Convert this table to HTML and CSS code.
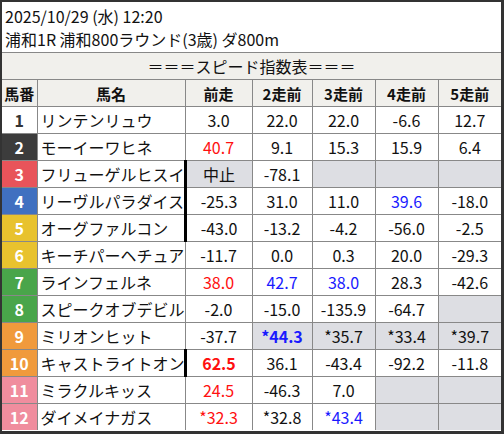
FILE: index.html
```html
<!DOCTYPE html>
<html lang="ja">
<head>
<meta charset="utf-8">
<link rel="stylesheet" href="styles.css">
</head>
<body>
<div class="frame">
  <div class="info">
    <div class="line">2025/10/29 (水) 12:20</div>
    <div class="line">浦和1R 浦和800ラウンド(3歳) ダ800m</div>
  </div>
  <div class="title">＝＝＝スピード指数表＝＝＝</div>
  <table class="speed">
    <colgroup>
      <col class="c-no"><col class="c-name"><col class="c-v1"><col class="c-v2"><col class="c-v3"><col class="c-v4"><col class="c-v5">
    </colgroup>
    <thead>
      <tr><th>馬番</th><th>馬名</th><th>前走</th><th>2走前</th><th>3走前</th><th>4走前</th><th>5走前</th></tr>
    </thead>
    <tbody>
      <tr><td class="no w1">1</td><td class="name">リンテンリュウ</td><td>3.0</td><td>22.0</td><td>22.0</td><td>-6.6</td><td>12.7</td></tr>
      <tr><td class="no w2">2</td><td class="name">モーイーワヒネ</td><td class="red">40.7</td><td>9.1</td><td>15.3</td><td>15.9</td><td>6.4</td></tr>
      <tr><td class="no w3">3</td><td class="name">フリューゲルヒスイ</td><td class="mark gray">中止</td><td>-78.1</td><td class="gray"></td><td class="gray"></td><td class="gray"></td></tr>
      <tr><td class="no w4">4</td><td class="name">リーヴルパラダイス</td><td class="mark">-25.3</td><td>31.0</td><td>11.0</td><td class="blue">39.6</td><td>-18.0</td></tr>
      <tr><td class="no w5">5</td><td class="name">オーグファルコン</td><td class="mark">-43.0</td><td>-13.2</td><td>-4.2</td><td>-56.0</td><td>-2.5</td></tr>
      <tr><td class="no w5">6</td><td class="name">キーチパーヘチュア</td><td>-11.7</td><td>0.0</td><td>0.3</td><td>20.0</td><td>-29.3</td></tr>
      <tr><td class="no w7">7</td><td class="name">ラインフェルネ</td><td class="red">38.0</td><td class="blue">42.7</td><td class="blue">38.0</td><td>28.3</td><td>-42.6</td></tr>
      <tr><td class="no w7">8</td><td class="name">スピークオブデビル</td><td>-2.0</td><td>-15.0</td><td>-135.9</td><td>-64.7</td><td class="gray"></td></tr>
      <tr><td class="no w9">9</td><td class="name">ミリオンヒット</td><td>-37.7</td><td class="gray blue bold">*44.3</td><td class="gray">*35.7</td><td class="gray">*33.4</td><td class="gray">*39.7</td></tr>
      <tr><td class="no w9">10</td><td class="name">キャストライトオン</td><td class="mark red bold">62.5</td><td>36.1</td><td>-43.4</td><td>-92.2</td><td>-11.8</td></tr>
      <tr><td class="no w11">11</td><td class="name">ミラクルキッス</td><td class="red">24.5</td><td>-46.3</td><td>7.0</td><td class="gray"></td><td class="gray"></td></tr>
      <tr><td class="no w11">12</td><td class="name">ダイメイナガス</td><td class="red">*32.3</td><td>*32.8</td><td class="blue">*43.4</td><td class="gray"></td><td class="gray"></td></tr>
    </tbody>
  </table>
</div>
</body>
</html>
```
FILE: styles.css
```css
html, body {
  margin: 0;
  padding: 0;
  background: #ffffff;
}
body {
  font-family: "Noto Sans CJK JP", "Noto Sans", sans-serif;
  color: #111;
}
.frame {
  width: 504px;
  height: 434px;
  box-sizing: border-box;
  border-style: solid;
  border-color: #333;
  border-width: 2px 3px 3px 2px;
  overflow: hidden;
  background: #fff;
}
.info {
  padding: 3px 0 3px 3px;
  height: 51px;
  box-sizing: border-box;
  border-bottom: 1px solid #888;
}
.line {
  font-size: 16px;
  line-height: 23px;
  white-space: nowrap;
}
.title {
  height: 26px;
  line-height: 26px;
  text-align: center;
  font-size: 16px;
  background: #f1f0ec;
  border-bottom: 1px solid #888;
}
.speed {
  width: 499px;
  table-layout: fixed;
  border-collapse: collapse;
}
.c-no { width: 35px; }
.c-name { width: 148px; }
.c-v1 { width: 67px; }
.c-v2 { width: 60px; }
.c-v3 { width: 63px; }
.c-v4 { width: 63px; }
.c-v5 { width: 63px; }
.speed th, .speed td {
  border: 1px solid #888;
  height: 26px;
  padding: 0;
  text-align: center;
  font-size: 16px;
  white-space: nowrap;
  overflow: hidden;
}
.speed th {
  background: #f1f0ec;
  font-weight: bold;
  font-size: 15px;
}
.speed tr > :first-child { border-left: none; }
.speed tr > :last-child { border-right: none; }
.speed thead th { border-top: none; }
.speed tbody tr:last-child td { border-bottom: none; }
.speed td.name {
  text-align: left;
  padding-left: 3px;
  font-size: 16px;
  letter-spacing: 0;
}
.speed td.no {
  font-weight: bold;
  font-size: 16px;
  color: #fff;
}
.w1 { background: #fff; color: #333 !important; }
.w2 { background: #3c3c3c; }
.w3 { background: #e8545a; }
.w4 { background: #4070c0; }
.w5 { background: #e8c22e; }
.w7 { background: #49a54a; }
.w9 { background: #f09a3c; }
.w11 { background: #f08d9e; }
.gray { background: #dddee3; }
.red { color: #ff1010; }
.blue { color: #1a1aff; }
.bold { font-weight: bold; }
.speed td.mark { border-left: 3px solid #000; }
```
